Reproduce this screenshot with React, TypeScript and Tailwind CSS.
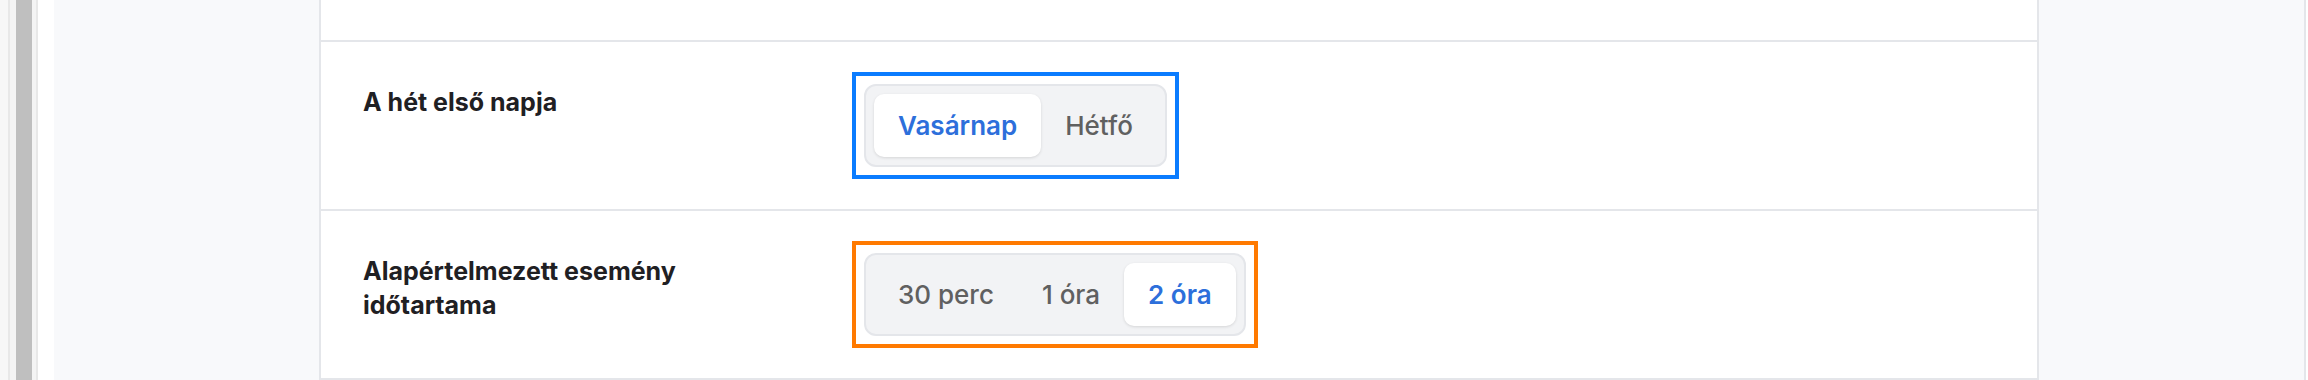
import React from "react";

type Opt = { label: string; active?: boolean };

function Segmented({ options, outline }: { options: Opt[]; outline: "blue" | "orange" }) {
  const ring =
    outline === "blue"
      ? "pointer-events-none absolute -inset-[12px] border-4 border-[#0a7cff]"
      : "pointer-events-none absolute -inset-[12px] border-4 border-[#ff7a00]";
  return (
    <div className="relative">
      <div className="flex items-stretch rounded-[12px] border-2 border-[#e4e6ea] bg-[#f2f3f5] p-2">
        {options.map((o) => (
          <div
            key={o.label}
            className={
              o.active
                ? "flex h-[63px] items-center rounded-[10px] bg-white px-6 text-[26px] font-semibold text-[#2d6fdb] shadow-[0_1px_3px_rgba(0,0,0,0.12)]"
                : "flex h-[63px] items-center rounded-[10px] px-6 text-[26px] font-medium text-[#606060]"
            }
          >
            {o.label}
          </div>
        ))}
      </div>
      <span className={ring} />
    </div>
  );
}

function Row({ label, children }: { label: string; children: React.ReactNode }) {
  return (
    <div className="flex items-start border-b-2 border-[#e4e6ea] px-[42px] py-[42px]">
      <div className="w-[420px] shrink-0 pt-[1px] text-[25px] font-bold leading-[34px] text-[#1f2023]">
        {label}
      </div>
      <div className="ml-[81px] flex items-center">{children}</div>
    </div>
  );
}

export default function App() {
  return (
    <div
      className="flex h-[380px] w-full overflow-hidden bg-white"
      style={{ fontFamily: "Inter, 'Noto Sans', sans-serif" }}
    >
      {/* left scrollbar-like strips */}
      <div className="h-full w-[8px] shrink-0 bg-[#f7f7f7]" />
      <div className="h-full w-[2px] shrink-0 bg-[#e8e8e8]" />
      <div className="h-full w-[6px] shrink-0 bg-[#f4f4f4]" />
      <div className="h-full w-[16px] shrink-0 bg-[#bfbfbf]" />
      <div className="h-full w-[4px] shrink-0 bg-[#f4f4f4]" />
      <div className="h-full w-[2px] shrink-0 bg-[#e8e8e8]" />
      <div className="h-full w-[16px] shrink-0 bg-white" />

      {/* main area */}
      <div className="flex h-full flex-1 bg-[#f8f9fb] pl-[265px]">
        <div className="h-full w-[1720px] shrink-0 border-x-2 border-[#e4e6ea] bg-white">
          <div className="h-[42px] border-b-2 border-[#e4e6ea]" />
          <Row label="A hét első napja">
            <Segmented
              outline="blue"
              options={[{ label: "Vasárnap", active: true }, { label: "Hétfő" }]}
            />
          </Row>
          <Row label="Alapértelmezett esemény időtartama">
            <Segmented
              outline="orange"
              options={[{ label: "30 perc" }, { label: "1 óra" }, { label: "2 óra", active: true }]}
            />
          </Row>
        </div>
        <div className="flex-1" />
        <div className="h-full w-[2px] shrink-0 bg-[#e4e6ea]" />
        <div className="h-full w-[2px] shrink-0 bg-white" />
      </div>
    </div>
  );
}
